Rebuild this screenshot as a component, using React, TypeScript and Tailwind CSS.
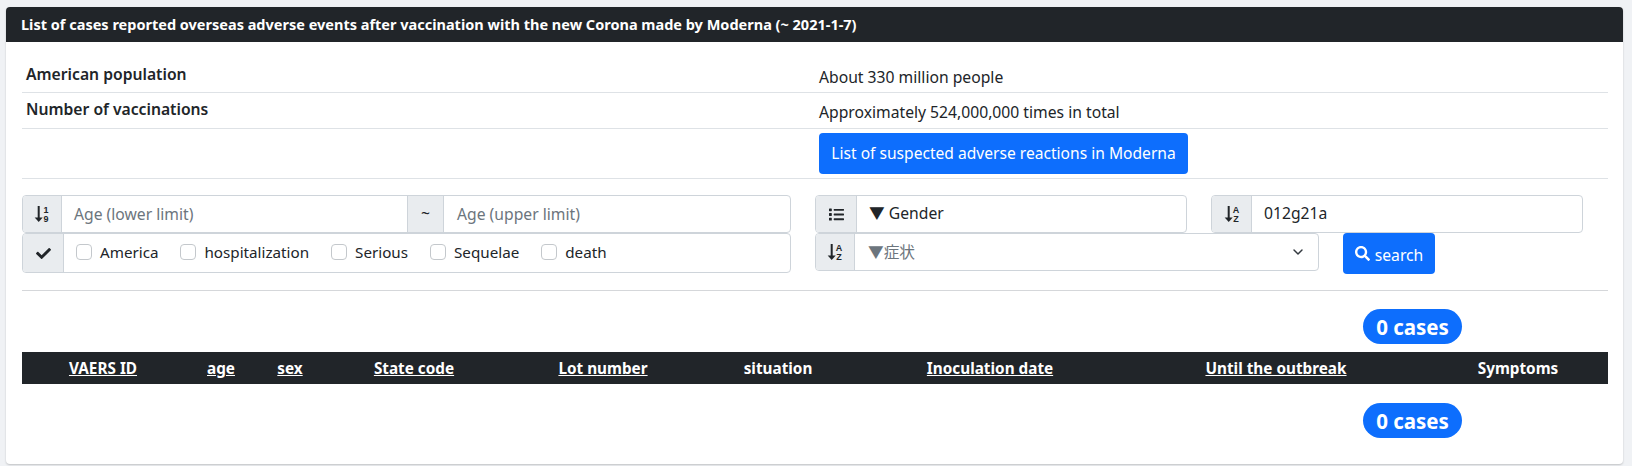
import React from "react";
import { FaCheck, FaList, FaSearch } from "react-icons/fa";
import { ChevronDown } from "lucide-react";

const font = "font-['Noto_Sans','Noto_Sans_CJK_KR',sans-serif]";

const columns = [
  { label: "VAERS ID", link: true },
  { label: "age", link: true },
  { label: "sex", link: true },
  { label: "State code", link: true },
  { label: "Lot number", link: true },
  { label: "situation", link: false },
  { label: "Inoculation date", link: true },
  { label: "Until the outbreak", link: true },
  { label: "Symptoms", link: false },
];

const checks = ["America", "hospitalization", "Serious", "Sequelae", "death"];

// arrow with two small characters beside it, like the sort icons in the input groups
const SortIcon = ({ top, bottom }: { top: string; bottom: string }) => (
  <svg width="16" height="18" viewBox="0 0 16 18" fill="currentColor">
    <rect x="3.7" y="1" width="2" height="13" />
    <path d="M0.7 12.5 H8.7 L4.7 17 Z" />
    <text x="12" y="8" textAnchor="middle" fontSize="9" fontWeight="700" fontFamily="Liberation Sans, sans-serif">{top}</text>
    <text x="12" y="16.5" textAnchor="middle" fontSize="9" fontWeight="700" fontFamily="Liberation Sans, sans-serif">{bottom}</text>
  </svg>
);

const Addon = ({ width, children }: { width: string; children: React.ReactNode }) => (
  <div className={`${width} flex shrink-0 items-center justify-center border-r border-[#ced4da] bg-[#e9ecef] text-[#212529]`}>
    {children}
  </div>
);

const Badge = () => (
  <div className="flex justify-end pr-[146px]">
    <span className="flex h-[35px] w-[99px] items-center justify-center rounded-full bg-[#0d6efd] pt-[1px] text-[20.5px] font-bold text-white">
      0 cases
    </span>
  </div>
);

const App = () => {
  return (
    <div className={`${font} h-[466px] w-full overflow-hidden bg-[#f0f2f5] pl-[6px] pt-[7px] text-[15.7px] text-[#212529]`}>
      <div className="h-[457px] w-[1617px] rounded-[4px] bg-white shadow-[0_1px_2px_rgba(0,0,0,0.2)]">
        <div className="flex h-[35px] items-center rounded-t-[4px] bg-[#212529] pl-[15px] text-[14.5px] font-bold text-white">
          List of cases reported overseas adverse events after vaccination with the new Corona made by Moderna (~ 2021-1-7)
        </div>

        <div className="pl-[16px] pr-[15px] pt-[15px]">
          <div className="flex h-[36px] border-b border-[#dee2e6]">
            <div className="w-[797px] pl-[4px] pt-[6px] font-semibold">American population</div>
            <div className="pt-[9px]">About 330 million people</div>
          </div>
          <div className="flex h-[36px] border-b border-[#dee2e6]">
            <div className="w-[797px] pl-[4px] pt-[5px] font-semibold">Number of vaccinations</div>
            <div className="pt-[8px]">Approximately 524,000,000 times in total</div>
          </div>
          <div className="flex h-[50px] items-center border-b border-[#dee2e6] pl-[797px]">
            <button className="h-[41px] w-[369px] rounded-[4px] bg-[#0d6efd] text-center text-[15.6px] text-white">
              List of suspected adverse reactions in Moderna
            </button>
          </div>

          <div className="mt-[16px] flex">
            <div className="w-[769px]">
              <div className="flex h-[38px] rounded-[4px] border border-[#ced4da] overflow-hidden">
                <Addon width="w-[39px]"><SortIcon top="1" bottom="9" /></Addon>
                <div className="flex w-[345px] items-center pl-[12px] pt-[1px] text-[#6c757d]">Age (lower limit)</div>
                <div className="flex w-[37px] shrink-0 items-center justify-center border-x border-[#ced4da] bg-[#e9ecef]">~</div>
                <div className="flex items-center pl-[13px] pt-[1px] text-[#6c757d]">Age (upper limit)</div>
              </div>
              <div className="flex h-[40px] rounded-[4px] border border-[#ced4da] overflow-hidden">
                <Addon width="w-[41px]"><FaCheck size={15} /></Addon>
                <div className="flex items-center gap-[22px] pb-[1px] pl-[12px] text-[15.2px]">
                  {checks.map((label) => (
                    <label key={label} className="flex items-center gap-[8px]">
                      <span className="h-[16px] w-[16px] rounded-[4px] border border-[#c4c8cc] bg-white" />
                      {label}
                    </label>
                  ))}
                </div>
              </div>
            </div>

            <div className="ml-[24px] w-[768px]">
              <div className="flex h-[38px] gap-[24px]">
                <div className="flex w-[372px] overflow-hidden rounded-[4px] border border-[#ced4da]">
                  <Addon width="w-[41px]"><FaList size={15} /></Addon>
                  <div className="flex items-center pl-[12px]">▼ Gender</div>
                </div>
                <div className="flex w-[372px] overflow-hidden rounded-[4px] border border-[#ced4da]">
                  <Addon width="w-[40px]"><SortIcon top="A" bottom="Z" /></Addon>
                  <div className="flex items-center pl-[12px]">012g21a</div>
                </div>
              </div>
              <div className="flex gap-[24px]">
                <div className="flex h-[38px] w-[504px] overflow-hidden rounded-[4px] border border-[#ced4da]">
                  <Addon width="w-[39px]"><SortIcon top="A" bottom="Z" /></Addon>
                  <div className="flex flex-1 items-center justify-between pl-[13px] pr-[12px] text-[#6c757d]">
                    <span className="pt-[1px]">▼症状</span>
                    <ChevronDown size={16} strokeWidth={2.2} className="text-[#343a40]" />
                  </div>
                </div>
                <button className="flex h-[41px] w-[92px] items-center justify-center gap-[5px] rounded-[4px] bg-[#0d6efd] text-white">
                  <FaSearch size={15} />
                  <span className="pt-[4px]">search</span>
                </button>
              </div>
            </div>
          </div>

          <div className="mt-[16px] border-b border-[#d5d7da]" />

          <div className="mt-[18px]"><Badge /></div>

          <div className="mt-[8px] grid h-[32px] grid-cols-[162px_74px_64px_184px_194px_156px_268px_304px_180px] items-center bg-[#212529] text-center text-[15.3px] font-bold text-white">
            {columns.map((col) => (
              <div key={col.label} className={col.link ? "underline" : ""}>{col.label}</div>
            ))}
          </div>

          <div className="mt-[19px]"><Badge /></div>
        </div>
      </div>
    </div>
  );
};

export default App;
